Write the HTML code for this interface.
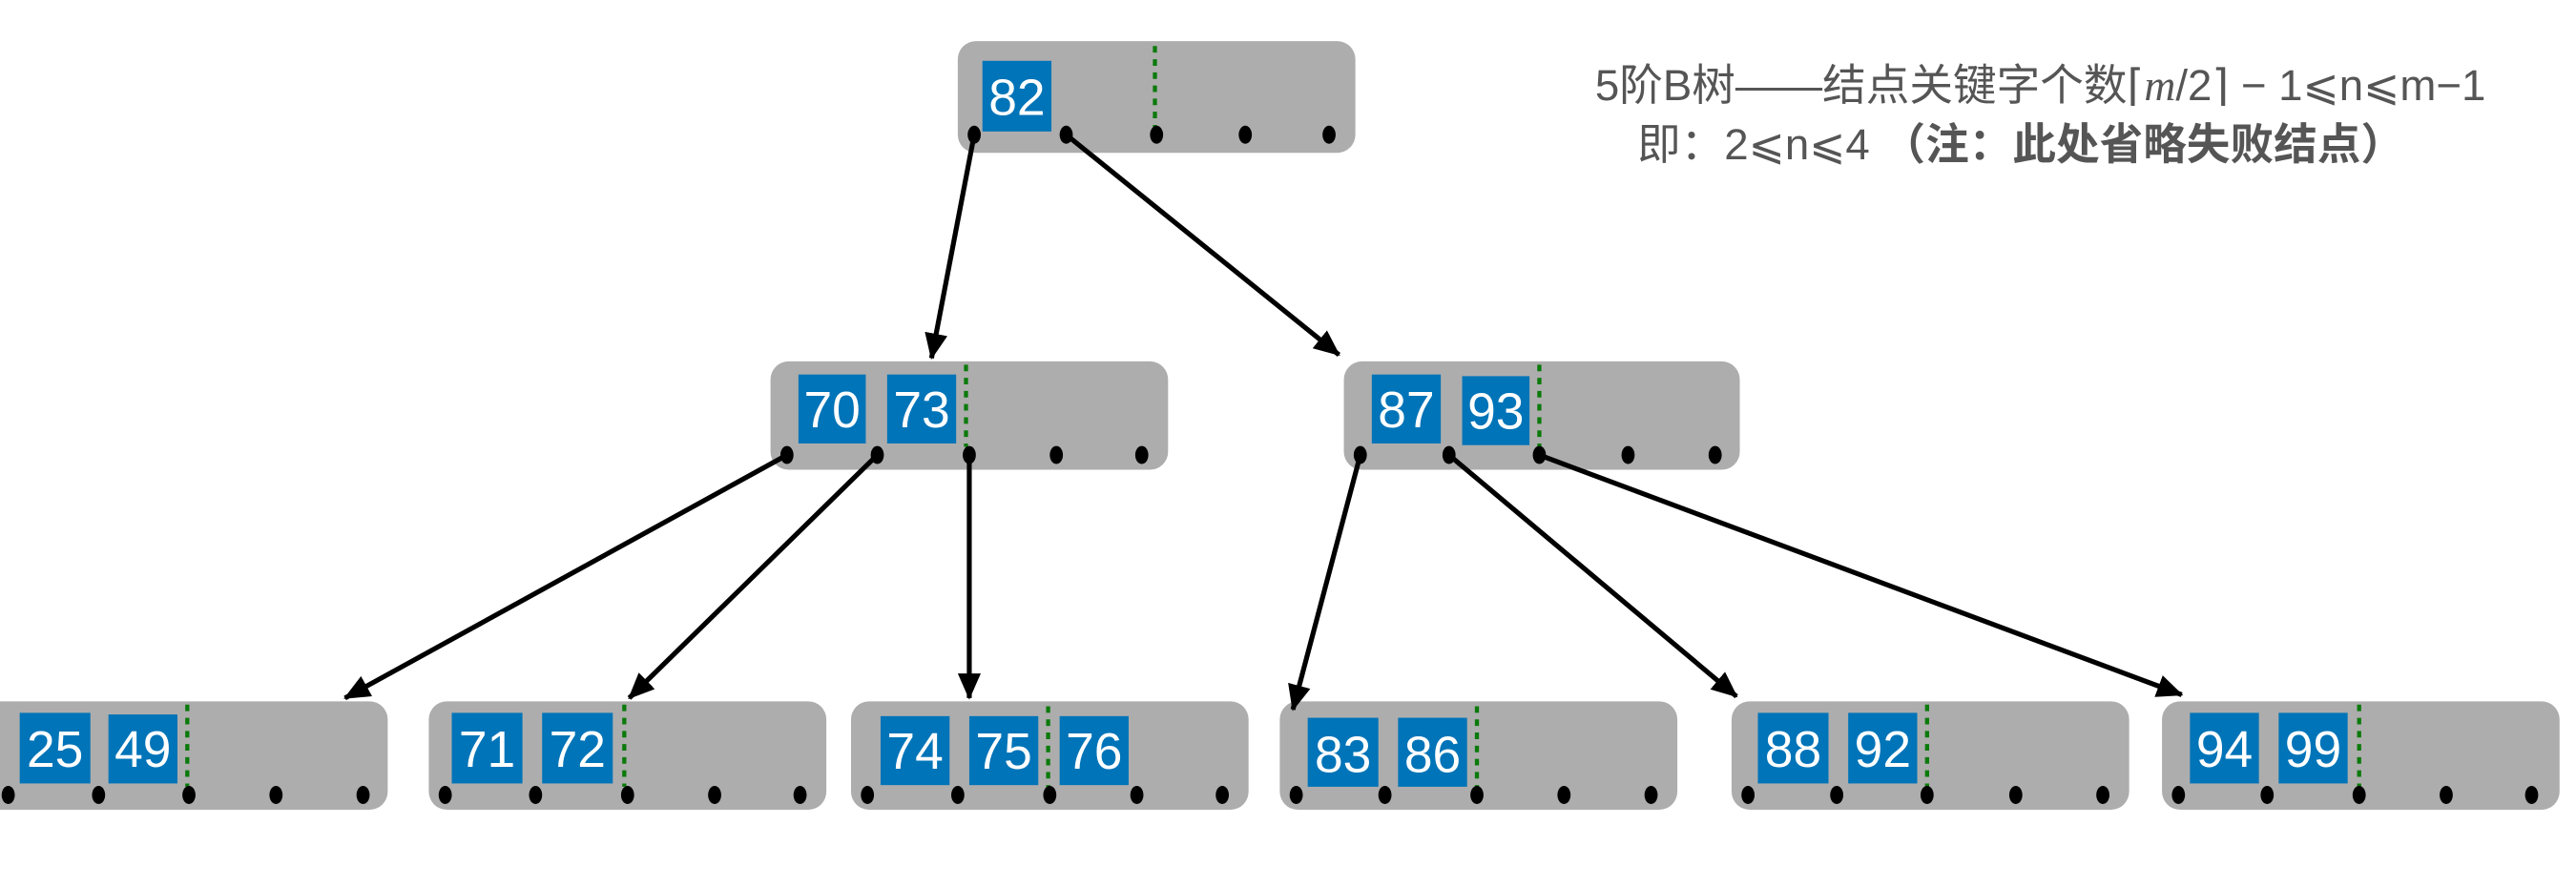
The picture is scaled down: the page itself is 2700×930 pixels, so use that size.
<!DOCTYPE html>
<html><head><meta charset="utf-8"><style>
html,body{margin:0;padding:0;background:#fff;width:2700px;height:930px;overflow:hidden}
svg{display:block}
.k{fill:#0074b8}
.kt{fill:#fff;font-family:"Liberation Sans",sans-serif;font-size:31px;text-anchor:middle}
.bx{fill:#adadad}
.g{stroke:#0a7a0a;stroke-width:2.5;stroke-dasharray:4,4}
.a{stroke:#000;stroke-width:3;fill:none}
</style></head><body>
<svg width="2700" height="930" viewBox="0 0 1568 540" xmlns="http://www.w3.org/2000/svg">
<defs>
<marker id="ar" markerWidth="16" markerHeight="14" refX="15" refY="7" orient="auto" markerUnits="userSpaceOnUse"><path d="M0,0 L16,7 L0,14z" fill="#000"/></marker></defs>

<text x="1242" y="61" font-family="'Liberation Sans','Noto Sans CJK SC',sans-serif" font-size="26.5" fill="#555" text-anchor="middle">5阶B树——结点关键字个数⌈<tspan font-family="'Liberation Serif',serif" font-style="italic">m</tspan>/2⌉ − 1⩽n⩽m−1</text>
<text x="1230" y="97" font-family="'Liberation Sans','Noto Sans CJK SC',sans-serif" font-size="26.5" fill="#555" text-anchor="middle">即：2⩽n⩽4 <tspan font-weight="bold">（注：此处省略失败结点）</tspan></text>

<g>
<rect class="bx" x="583" y="25" width="242" height="68" rx="11"/>
<rect class="k" x="598" y="37" width="42" height="43"/><text class="kt" x="619" y="70">82</text>
<line class="g" x1="703" y1="28" x2="703" y2="78"/>

<rect class="bx" x="469" y="220" width="242" height="66" rx="11"/>
<rect class="k" x="486" y="228" width="41" height="42"/><text class="kt" x="506.5" y="260">70</text>
<rect class="k" x="540" y="228" width="42" height="42"/><text class="kt" x="561" y="260">73</text>
<line class="g" x1="588" y1="222" x2="588" y2="272"/>

<rect class="bx" x="818" y="220" width="241" height="66" rx="11"/>
<rect class="k" x="835" y="228" width="42" height="42"/><text class="kt" x="856" y="260">87</text>
<rect class="k" x="890" y="229" width="41" height="42"/><text class="kt" x="910.5" y="261">93</text>
<line class="g" x1="937" y1="222" x2="937" y2="272"/>

<rect class="bx" x="-12" y="427" width="248" height="66" rx="11"/>
<rect class="k" x="12" y="434" width="43" height="43"/><text class="kt" x="33.5" y="467">25</text>
<rect class="k" x="66" y="435" width="42" height="42"/><text class="kt" x="87" y="467">49</text>
<line class="g" x1="114" y1="429" x2="114" y2="479"/>

<rect class="bx" x="261" y="427" width="242" height="66" rx="11"/>
<rect class="k" x="275" y="434" width="43" height="43"/><text class="kt" x="296.5" y="467">71</text>
<rect class="k" x="330" y="434" width="43" height="43"/><text class="kt" x="351.5" y="467">72</text>
<line class="g" x1="380" y1="429" x2="380" y2="479"/>

<rect class="bx" x="518" y="427" width="242" height="66" rx="11"/>
<rect class="k" x="536" y="436" width="42" height="42"/><text class="kt" x="557" y="468">74</text>
<rect class="k" x="590" y="436" width="42" height="42"/><text class="kt" x="611" y="468">75</text>
<rect class="k" x="645" y="436" width="42" height="42"/><text class="kt" x="666" y="468">76</text>
<line class="g" x1="638" y1="430" x2="638" y2="480"/>

<rect class="bx" x="779" y="427" width="242" height="66" rx="11"/>
<rect class="k" x="796" y="437" width="43" height="42"/><text class="kt" x="817.5" y="470">83</text>
<rect class="k" x="851" y="437" width="42" height="42"/><text class="kt" x="872" y="470">86</text>
<line class="g" x1="899" y1="430" x2="899" y2="480"/>

<rect class="bx" x="1054" y="427" width="242" height="66" rx="11"/>
<rect class="k" x="1070" y="434" width="43" height="43"/><text class="kt" x="1091.5" y="467">88</text>
<rect class="k" x="1125" y="434" width="42" height="43"/><text class="kt" x="1146" y="467">92</text>
<line class="g" x1="1173" y1="429" x2="1173" y2="479"/>

<rect class="bx" x="1316" y="427" width="242" height="66" rx="11"/>
<rect class="k" x="1333" y="434" width="42" height="43"/><text class="kt" x="1354" y="467">94</text>
<rect class="k" x="1387" y="434" width="42" height="43"/><text class="kt" x="1408" y="467">99</text>
<line class="g" x1="1436" y1="429" x2="1436" y2="479"/>
</g>

<g class="a" marker-end="url(#ar)">
<line x1="593" y1="82" x2="567" y2="218"/>
<line x1="649" y1="82" x2="815" y2="216"/>
<line x1="479" y1="277" x2="210" y2="425"/>
<line x1="534" y1="277" x2="383" y2="425"/>
<line x1="590" y1="277" x2="590" y2="425"/>
<line x1="828" y1="277" x2="787" y2="432"/>
<line x1="882" y1="277" x2="1057" y2="424"/>
<line x1="937" y1="277" x2="1328" y2="423"/>
</g>

<g fill="#000">
<ellipse cx="593" cy="82" rx="4" ry="5.5"/><ellipse cx="649" cy="82" rx="4" ry="5.5"/><ellipse cx="704" cy="82" rx="4" ry="5.5"/><ellipse cx="758" cy="82" rx="4" ry="5.5"/><ellipse cx="809" cy="82" rx="4" ry="5.5"/>
<ellipse cx="479" cy="277" rx="4" ry="5.5"/><ellipse cx="534" cy="277" rx="4" ry="5.5"/><ellipse cx="590" cy="277" rx="4" ry="5.5"/><ellipse cx="643" cy="277" rx="4" ry="5.5"/><ellipse cx="695" cy="277" rx="4" ry="5.5"/>
<ellipse cx="828" cy="277" rx="4" ry="5.5"/><ellipse cx="882" cy="277" rx="4" ry="5.5"/><ellipse cx="937" cy="277" rx="4" ry="5.5"/><ellipse cx="991" cy="277" rx="4" ry="5.5"/><ellipse cx="1044" cy="277" rx="4" ry="5.5"/>
<ellipse cx="5" cy="484" rx="4" ry="5.5"/><ellipse cx="60" cy="484" rx="4" ry="5.5"/><ellipse cx="115" cy="484" rx="4" ry="5.5"/><ellipse cx="168" cy="484" rx="4" ry="5.5"/><ellipse cx="221" cy="484" rx="4" ry="5.5"/>
<ellipse cx="271" cy="484" rx="4" ry="5.5"/><ellipse cx="326" cy="484" rx="4" ry="5.5"/><ellipse cx="382" cy="484" rx="4" ry="5.5"/><ellipse cx="435" cy="484" rx="4" ry="5.5"/><ellipse cx="487" cy="484" rx="4" ry="5.5"/>
<ellipse cx="528" cy="484" rx="4" ry="5.5"/><ellipse cx="583" cy="484" rx="4" ry="5.5"/><ellipse cx="639" cy="484" rx="4" ry="5.5"/><ellipse cx="692" cy="484" rx="4" ry="5.5"/><ellipse cx="744" cy="484" rx="4" ry="5.5"/>
<ellipse cx="789" cy="484" rx="4" ry="5.5"/><ellipse cx="843" cy="484" rx="4" ry="5.5"/><ellipse cx="899" cy="484" rx="4" ry="5.5"/><ellipse cx="952" cy="484" rx="4" ry="5.5"/><ellipse cx="1005" cy="484" rx="4" ry="5.5"/>
<ellipse cx="1064" cy="484" rx="4" ry="5.5"/><ellipse cx="1118" cy="484" rx="4" ry="5.5"/><ellipse cx="1173" cy="484" rx="4" ry="5.5"/><ellipse cx="1227" cy="484" rx="4" ry="5.5"/><ellipse cx="1280" cy="484" rx="4" ry="5.5"/>
<ellipse cx="1326" cy="484" rx="4" ry="5.5"/><ellipse cx="1380" cy="484" rx="4" ry="5.5"/><ellipse cx="1436" cy="484" rx="4" ry="5.5"/><ellipse cx="1489" cy="484" rx="4" ry="5.5"/><ellipse cx="1541" cy="484" rx="4" ry="5.5"/>
</g>
</svg>
</body></html>
